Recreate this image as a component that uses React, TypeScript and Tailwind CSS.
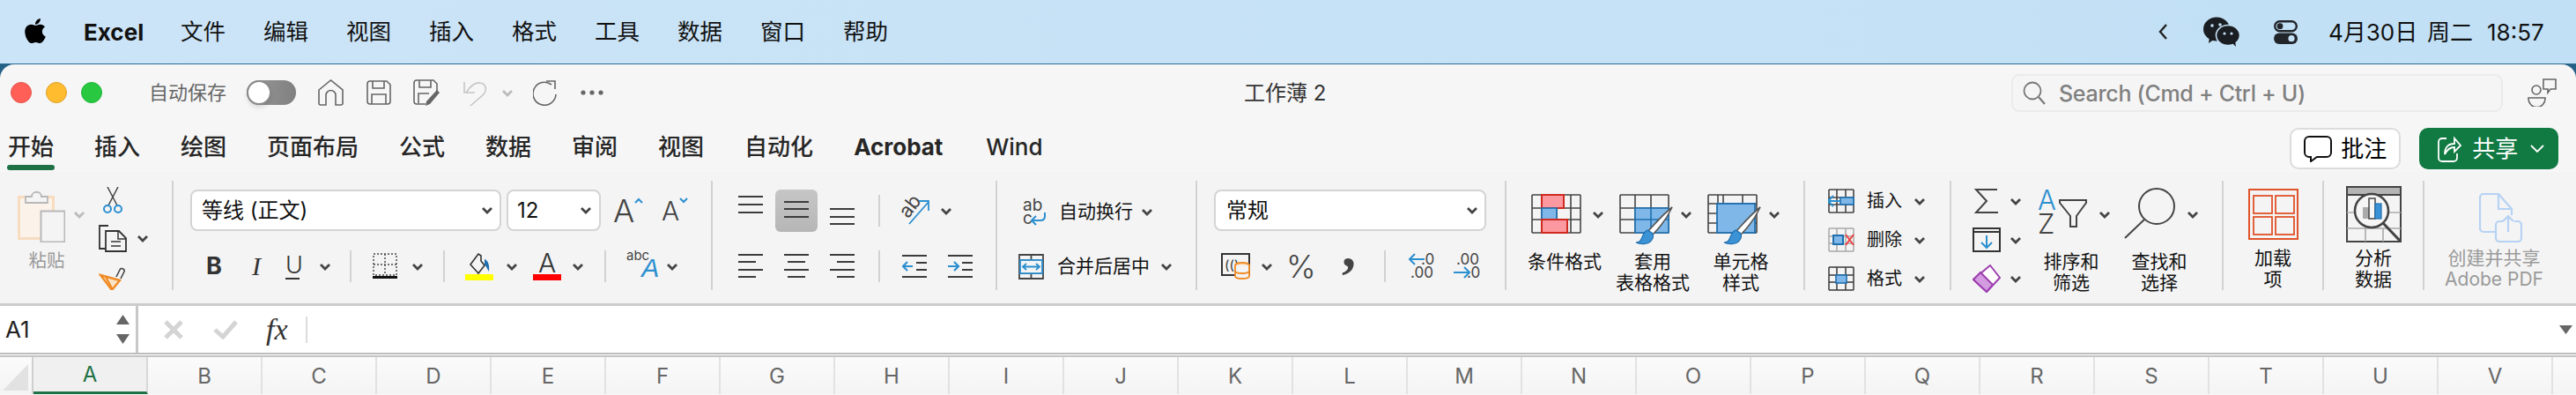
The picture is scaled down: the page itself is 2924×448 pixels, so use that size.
import { FaApple } from "react-icons/fa";

const menus = ["文件", "编辑", "视图", "插入", "格式", "工具", "数据", "窗口", "帮助"];
const tabs = ["插入", "绘图", "页面布局", "公式", "数据", "审阅", "视图", "自动化"];
const columns = "BCDEFGHIJKLMNOPQRSTUV".split("");

function Chevron({ className = "", color = "#444" }: { className?: string; color?: string }) {
  return (
    <svg width="14" height="9" viewBox="0 0 14 9" className={`shrink-0 ${className}`}>
      <path d="M2 2l5 5 5-5" fill="none" stroke={color} strokeWidth="2.8" />
    </svg>
  );
}

function Sep() {
  return <div className="h-[36px] w-[2px] shrink-0 bg-[#d2d2d2]" />;
}

function Lines({ ys, xs }: { ys: number[]; xs: [number, number][] }) {
  return (
    <svg width="28" height="28" viewBox="0 0 28 28">
      {ys.map((y, i) => (
        <line key={y} x1={xs[i][0]} x2={xs[i][1]} y1={y} y2={y} stroke="#3c3c3c" strokeWidth="2" />
      ))}
    </svg>
  );
}

const full: [number, number][] = [[0, 28], [0, 28], [0, 28], [0, 28]];

function Indent({ flip }: { flip?: boolean }) {
  return (
    <svg width="28" height="28" viewBox="0 0 28 28">
      <path d="M0 2h28M0 26h28" stroke="#3c3c3c" strokeWidth="2" />
      <path d="M16 10h12M16 18h12" stroke="#3c3c3c" strokeWidth="2" />
      {flip ? (
        <path d="M0 14h11M7 9l5 5-5 5" fill="none" stroke="#2b8fd0" strokeWidth="2.2" />
      ) : (
        <path d="M12 14H1M6 9l-5 5 5 5" fill="none" stroke="#2b8fd0" strokeWidth="2.2" />
      )}
    </svg>
  );
}

function GridBase({ x, y }: { x: number[]; y: number[] }) {
  return (
    <>
      {x.map((v) => (
        <line key={`x${v}`} x1={v} x2={v} y1={y[0]} y2={y[y.length - 1]} stroke="#444" strokeWidth="1.6" />
      ))}
      {y.map((v) => (
        <line key={`y${v}`} y1={v} y2={v} x1={x[0]} x2={x[x.length - 1]} stroke="#444" strokeWidth="1.6" />
      ))}
    </>
  );
}

function Brush() {
  return (
    <>
      <path d="M60 15C55 26 46 38 38 46l-5-4C41 33 51 22 60 15z" fill="#fff" stroke="#555" strokeWidth="1.6" />
      <path d="M32 41c-5 2-5 7-7 10-1 3-3 4-6 4 6 3 15 2 18-3 2-3 2-6 0-8z" fill="#3b93d6" stroke="#1f6fb0" strokeWidth="1.2" />
    </>
  );
}

function CellIcon({ kind }: { kind: "insert" | "delete" | "format" }) {
  return (
    <svg width="30" height="28" viewBox="0 0 30 28">
      <GridBase x={[1, 10, 20, 29]} y={[1, 10, 18, 27]} />
      {kind === "insert" && (
        <>
          <rect x="14" y="10" width="15" height="8" fill="#7fb8e8" stroke="#1f6fb0" strokeWidth="1.6" />
          <path d="M14 14H1M6 8l-6 6 6 6" fill="none" stroke="#2b8fd0" strokeWidth="2" />
        </>
      )}
      {kind === "delete" && (
        <>
          <rect x="0" y="0" width="30" height="28" fill="#f4f4f4" opacity="0.6" />
          <rect x="6" y="9" width="11" height="10" fill="#7fb8e8" stroke="#1f6fb0" strokeWidth="2" />
          <path d="M20 8l9 12M29 8l-9 12" stroke="#ee4040" strokeWidth="2" />
        </>
      )}
      {kind === "format" && (
        <>
          <rect x="9" y="10" width="12" height="9" fill="#7fb8e8" stroke="#1f6fb0" strokeWidth="1.6" />
        </>
      )}
    </svg>
  );
}

export default function App() {
  return (
    <div className="h-[448px] w-[2924px] overflow-hidden bg-[#245f85] [font-family:'Inter','Noto_Sans_CJK_SC',sans-serif] text-[#222]">
      <header className="flex h-[73px] items-center border-b-[1px] border-[#2a6d93] bg-gradient-to-r from-[#cce4f7] to-[#c1e0f5] text-[#111]">
        <FaApple className="ml-[25px] h-[32px] w-[30px] -translate-y-[1px] text-black" />
        <span className="ml-[40px] w-[70px] text-[26px] font-bold">Excel</span>
        <nav className="ml-[40px] flex gap-[43px] text-[25.5px]">
          {menus.map((m) => (
            <span key={m} className="w-[51px]">{m}</span>
          ))}
        </nav>
        <svg width="14" height="22" viewBox="0 0 14 22" className="ml-[1441px]">
          <path d="M10 3l-7 8 7 8" fill="none" stroke="#222" strokeWidth="2.4" />
        </svg>
        <svg width="42" height="34" viewBox="0 0 42 34" className="ml-[38px]">
          <ellipse cx="15" cy="14" rx="15" ry="13.5" fill="#1a1d21" />
          <path d="M7 23l-1 7 7-5z" fill="#1a1d21" />
          <ellipse cx="28" cy="21" rx="13.5" ry="11.5" fill="#1a1d21" stroke="#c4e1f5" strokeWidth="1.6" />
          <path d="M33 30l4 4-1-7z" fill="#1a1d21" />
          <circle cx="10" cy="10" r="1.8" fill="#c4e1f5" />
          <circle cx="19" cy="9" r="1.8" fill="#c4e1f5" />
          <circle cx="24" cy="19" r="1.6" fill="#c4e1f5" />
          <circle cx="32" cy="19" r="1.6" fill="#c4e1f5" />
        </svg>
        <svg width="27" height="27" viewBox="0 0 27 27" className="ml-[38px]">
          <rect x="1.2" y="1.2" width="24.6" height="11" rx="5.5" fill="none" stroke="#22262b" strokeWidth="2.4" />
          <circle cx="7" cy="6.7" r="3.4" fill="#22262b" />
          <rect y="14.5" width="27" height="12.5" rx="6.2" fill="#22262b" />
          <circle cx="20" cy="20.7" r="3.6" fill="#c4e1f5" />
        </svg>
        <span className="ml-[35px] w-[104px] whitespace-nowrap text-[26px]">4月30日</span>
        <span className="ml-[8px] text-[26px]">周二</span>
        <span className="ml-[16px] text-[26px]">18:57</span>
      </header>

      <main className="h-[375px] overflow-hidden rounded-t-[16px] bg-[#f6f6f6]">
        {/* title bar */}
        <div className="flex h-[64px] items-center">
          <div className="ml-[12px] h-[24px] w-[24px] rounded-full border border-[#e5534b] bg-[#ff5f57]" />
          <div className="ml-[16px] h-[24px] w-[24px] rounded-full border border-[#e0a028] bg-[#febc2e]" />
          <div className="ml-[16px] h-[24px] w-[24px] rounded-full border border-[#1fb53a] bg-[#28c840]" />
          <span className="ml-[53px] w-[88px] text-[22px] text-[#666]">自动保存</span>
          <div className="ml-[23px] flex h-[28px] w-[56px] items-center rounded-full bg-gradient-to-r from-[#9a9a9a] to-[#808080]">
            <div className="h-[28px] w-[28px] rounded-full border-2 border-[#8a8a8a] bg-white shadow-md" />
          </div>
          <svg width="29" height="30" viewBox="0 0 29 30" className="ml-[25px]">
            <path d="M1 12L14.5 1 28 12v15a2 2 0 0 1-2 2h-6V18a5 5 0 0 0-11 0v11H3a2 2 0 0 1-2-2z" fill="none" stroke="#666" strokeWidth="1.6" />
          </svg>
          <svg width="28" height="28" viewBox="0 0 28 28" className="ml-[26px]">
            <path d="M1 4a3 3 0 0 1 3-3h19l4 4v19a3 3 0 0 1-3 3H4a3 3 0 0 1-3-3z" fill="none" stroke="#666" strokeWidth="1.6" />
            <path d="M7 1v8h13V1M6 27V16h16v11" fill="none" stroke="#666" strokeWidth="1.6" />
          </svg>
          <svg width="31" height="30" viewBox="0 0 31 30" className="ml-[25px]">
            <path d="M1 4a3 3 0 0 1 3-3h19l4 4v8M14 28H4a3 3 0 0 1-3-3V4" fill="none" stroke="#666" strokeWidth="1.6" />
            <path d="M7 1v8h13V1M6 27V16h12" fill="none" stroke="#666" strokeWidth="1.6" />
            <path d="M27 12l3 3-11 13-5 2 1-5z" fill="#666" />
          </svg>
          <svg width="28" height="32" viewBox="0 0 28 32" className="ml-[25px]">
            <path d="M4 16C8 10 14 4 20 5c7 1 8 8 4 13L9 31M2 4v12h12" fill="none" stroke="#c6c6c6" strokeWidth="1.6" />
          </svg>
          <Chevron className="ml-[16px]" color="#bbb" />
          <svg width="27" height="30" viewBox="0 0 27 30" className="ml-[22px]">
            <path d="M21 6a13 13 0 1 0 5 11" fill="none" stroke="#666" strokeWidth="1.6" />
            <path d="M15 2h10v9" fill="none" stroke="#666" strokeWidth="1.6" />
          </svg>
          <svg width="26" height="6" viewBox="0 0 26 6" className="ml-[27px]">
            <circle cx="3" cy="3" r="2.6" fill="#666" />
            <circle cx="13" cy="3" r="2.6" fill="#666" />
            <circle cx="23" cy="3" r="2.6" fill="#666" />
          </svg>
          <span className="ml-[727px] w-[89px] whitespace-nowrap pt-[2px] text-[24px] text-[#333]">工作薄 2</span>
          <div className="ml-[782px] flex h-[43px] w-[558px] items-center rounded-[9px] border-2 border-[#ebebeb] bg-[#f5f5f5]">
            <svg width="26" height="27" viewBox="0 0 26 27" className="ml-[11px]">
              <circle cx="11" cy="11" r="9.5" fill="none" stroke="#777" strokeWidth="1.8" />
              <path d="M18 18l7 8" stroke="#777" strokeWidth="2" />
            </svg>
            <span className="ml-[15px] whitespace-nowrap pt-[3px] text-[25px] font-medium tracking-[-0.3px] text-[#808080]">Search (Cmd + Ctrl + U)</span>
          </div>
          <svg width="33" height="32" viewBox="0 0 33 32" className="ml-[28px]">
            <circle cx="10" cy="13" r="5" fill="none" stroke="#666" strokeWidth="1.6" />
            <path d="M1 22h19v1a9 9 0 0 1-19 0z" fill="none" stroke="#666" strokeWidth="1.6" />
            <path d="M18 1h14v11h-6l-3 4v-4h-5z" fill="none" stroke="#666" strokeWidth="1.6" />
          </svg>
        </div>

        {/* tabs */}
        <div className="flex h-[58px] items-start pl-[9px] pt-[8px] text-[26px] font-medium text-[#262626]">
          <div className="flex w-[52px] flex-col items-center">
            <span className="h-[42px] pt-[1px] leading-[42px]">开始</span>
            <div className="h-[6px] w-[54px] shrink-0 rounded-[3px] bg-[#1e7145]" />
          </div>
          <nav className="ml-[46px] mt-[1px] flex gap-[46px] leading-[42px]">
            {tabs.map((t) => (
              <span key={t} className="whitespace-nowrap">{t}</span>
            ))}
            <span className="w-[102px] font-bold">Acrobat</span>
            <span className="ml-[2px] w-[62px]">Wind</span>
          </nav>
          <button className="ml-[1418px] flex h-[47px] w-[126px] items-center rounded-[10px] border-2 border-[#dcdcdc] bg-white text-black">
            <svg width="32" height="30" viewBox="0 0 32 30" className="ml-[14px]">
              <path d="M6 1h20a5 5 0 0 1 5 5v13a5 5 0 0 1-5 5H15l-7 5v-5H6a5 5 0 0 1-5-5V6a5 5 0 0 1 5-5z" fill="none" stroke="#111" strokeWidth="2" />
            </svg>
            <span className="ml-[10px] text-[26px] font-normal">批注</span>
          </button>
          <button className="ml-[21px] flex h-[47px] w-[158px] items-center rounded-[10px] bg-[#117a43] text-white">
            <svg width="28" height="30" viewBox="0 0 28 30" className="ml-[20px]">
              <path d="M11 3H6a4 4 0 0 0-4 4v18a4 4 0 0 0 4 4h13a4 4 0 0 0 4-4v-5" fill="none" stroke="#fff" strokeWidth="1.8" />
              <path d="M9 21c0-8 4-12 11-12V3l7 8-7 7v-5c-5 0-8 2-11 8z" fill="none" stroke="#fff" strokeWidth="1.8" />
            </svg>
            <span className="ml-[12px] text-[26px] font-normal">共享</span>
            <svg width="16" height="10" viewBox="0 0 16 10" className="ml-[14px]">
              <path d="M1 1l7 7 7-7" fill="none" stroke="#fff" strokeWidth="1.8" />
            </svg>
          </button>
        </div>

        {/* ribbon */}
        <div className="flex h-[152px] border-b-[3px] border-[#cccccc] bg-[#f4f4f4] pt-[10px]">
          {/* clipboard */}
          <div className="flex h-[124px] w-[197px] border-r-2 border-[#d2d2d2]">
            <div className="ml-[20px] flex w-[54px] flex-col items-center pt-[11px]">
              <svg width="54" height="59" viewBox="0 0 54 59">
                <rect x="1.5" y="7.5" width="39" height="47" fill="#fbf3ea" stroke="#f8dcc0" strokeWidth="3" />
                <path d="M9 14V7h7c0-7 11-7 11 0h7v7z" fill="#f4f4f4" stroke="#b8b8b8" strokeWidth="1.8" />
                <rect x="26.5" y="23.5" width="27" height="35" fill="#f4f4f4" stroke="#b8b8b8" strokeWidth="2" />
              </svg>
              <span className="ml-[12px] mt-[6px] whitespace-nowrap text-[20.5px] text-[#9a9a9a]">粘贴</span>
            </div>
            <Chevron className="ml-[9px] mt-[34px]" color="#bbb" />
            <div className="ml-[15px] flex w-[60px] flex-col pt-[7px]">
              <svg width="22" height="30" viewBox="0 0 22 30" className="ml-[5px]">
                <path d="M5 0l11 21M17 0L6 21" stroke="#444" strokeWidth="1.5" />
                <circle cx="5" cy="25" r="4" fill="none" stroke="#2b8fd0" strokeWidth="2" />
                <circle cx="17" cy="25" r="4" fill="none" stroke="#2b8fd0" strokeWidth="2" />
              </svg>
              <div className="mt-[13px] flex items-center">
                <svg width="32" height="31" viewBox="0 0 32 31">
                  <path d="M11 1H1v26h9" fill="none" stroke="#333" strokeWidth="1.8" />
                  <path d="M8 7h15l8 8v15H8z" fill="#f4f4f4" stroke="#333" strokeWidth="1.8" />
                  <path d="M22 7v9h9M14 19h11M14 24h11" fill="none" stroke="#333" strokeWidth="1.5" />
                </svg>
                <Chevron className="ml-[11px]" />
              </div>
              <svg width="31" height="29" viewBox="0 0 31 29" className="mt-[14px]">
                <path d="M20 14l4-8c1-3 6-1 5 2l-4 8" fill="none" stroke="#444" strokeWidth="1.6" />
                <path d="M2 12l22 6-9 11z" fill="#fbe3c6" stroke="#f08a24" strokeWidth="2.4" />
                <path d="M8 14l7 13" stroke="#f08a24" strokeWidth="2.2" />
              </svg>
            </div>
          </div>

          {/* font */}
          <div className="h-[124px] w-[612px] border-r-2 border-[#d2d2d2] pl-[19px] pt-[10px]">
            <div className="flex h-[47px] items-center">
              <div className="flex h-[47px] w-[353px] items-center justify-between rounded-[8px] border-2 border-[#d4d4d4] bg-white pl-[11px] pr-[7px]">
                <span className="text-[24px] text-[#111]">等线 (正文)</span>
                <Chevron />
              </div>
              <div className="ml-[6px] flex h-[47px] w-[107px] items-center justify-between rounded-[8px] border-2 border-[#d4d4d4] bg-white pl-[10px] pr-[8px]">
                <span className="text-[24px] text-[#111]">12</span>
                <Chevron />
              </div>
              <div className="ml-[14px] flex w-[31px] items-start">
                <span className="text-[36px] font-light leading-[36px] text-[#444]">A</span>
                <svg width="10" height="7" viewBox="0 0 10 7" className="mt-[3px] shrink-0">
                  <path d="M1 6l4-4 4 4" fill="none" stroke="#2b8fd0" strokeWidth="2" />
                </svg>
              </div>
              <div className="ml-[24px] flex w-[27px] items-start">
                <span className="text-[30px] font-light leading-[36px] text-[#444]">A</span>
                <svg width="10" height="7" viewBox="0 0 10 7" className="mt-[3px] shrink-0">
                  <path d="M1 1l4 4 4-4" fill="none" stroke="#2b8fd0" strokeWidth="2" />
                </svg>
              </div>
            </div>
            <div className="mt-[20px] flex h-[40px] items-center">
              <span className="ml-[18px] w-[14px] text-[27px] font-bold leading-[30px] text-[#333]">B</span>
              <span className="ml-[38px] w-[12px] [font-family:'Liberation_Serif',serif] text-[30px] italic leading-[30px] text-[#333]">I</span>
              <span className="ml-[26px] w-[16px] border-b-2 border-[#333] text-center text-[27px] font-light leading-[28px] text-[#333]">U</span>
              <Chevron className="ml-[22px]" />
              <div className="ml-[21px]"><Sep /></div>
              <svg width="28" height="30" viewBox="0 0 28 30" className="ml-[24px]">
                <path d="M1 1h26v24H1zM14 1v24M1 13h26" fill="none" stroke="#444" strokeWidth="1.4" strokeDasharray="2 2" />
                <rect y="26" width="28" height="3" fill="#111" />
              </svg>
              <Chevron className="ml-[16px]" />
              <div className="ml-[22px]"><Sep /></div>
              <svg width="32" height="32" viewBox="0 0 32 32" className="ml-[23px]">
                <path d="M15 2l-9 12 9 10 7-9-4-5V4z" fill="none" stroke="#333" strokeWidth="1.6" />
                <path d="M22 8c4 1 6 7 5 14-2-3-3-6-5-8z" fill="#1f6fb0" />
                <rect y="25" width="32" height="7" fill="#ffff00" />
              </svg>
              <Chevron className="ml-[14px]" />
              <div className="ml-[17px] flex w-[32px] flex-col items-center">
                <span className="h-[24px] text-[30px] font-light leading-[24px] text-[#333]">A</span>
                <div className="mt-[1px] h-[7px] w-[32px] bg-[#ff0000]" />
              </div>
              <Chevron className="ml-[12px]" />
              <div className="ml-[23px]"><Sep /></div>
              <div className="ml-[23px] flex w-[38px] items-start">
                <span className="mt-[-5px] text-[15px] leading-[16px] text-[#444]">abc</span>
                <span className="-ml-[9px] mt-[3px] [font-family:'Liberation_Sans',sans-serif] text-[30px] italic leading-[28px] text-[#2b8fd0]">A</span>
              </div>
              <Chevron className="ml-[7px]" />
            </div>
          </div>

          {/* alignment */}
          <div className="h-[124px] w-[323px] border-r-2 border-[#d2d2d2] pl-[19px] pt-[10px]">
            <div className="flex h-[48px] items-center">
              <div className="flex h-[48px] w-[48px] items-start justify-center pt-[7px]">
                <Lines ys={[1, 10, 19]} xs={full} />
              </div>
              <div className="ml-[4px] flex h-[48px] w-[48px] items-start justify-center rounded-[6px] bg-gradient-to-b from-[#c6c6c6] to-[#b6b6b6] pt-[13px]">
                <Lines ys={[1, 9, 18]} xs={full} />
              </div>
              <div className="ml-[4px] flex h-[48px] w-[48px] items-start justify-center pt-[21px]">
                <Lines ys={[1, 10, 18]} xs={full} />
              </div>
              <div className="ml-[17px]"><Sep /></div>
              <svg width="34" height="31" viewBox="0 0 34 31" className="ml-[22px] overflow-visible">
                <text x="3" y="21" fontSize="22" fill="#444" transform="rotate(-52 10 16)">ab</text>
                <path d="M11 30L33 5M22 4h11v11" fill="none" stroke="#2b8fd0" strokeWidth="1.8" />
              </svg>
              <Chevron className="ml-[12px]" />
            </div>
            <div className="mt-[19px] flex h-[40px] items-center">
              <div className="flex w-[48px] justify-center">
                <Lines ys={[1, 9, 18, 26]} xs={[[0, 28], [0, 20], [0, 28], [0, 20]]} />
              </div>
              <div className="ml-[4px] flex w-[48px] justify-center">
                <Lines ys={[1, 9, 18, 26]} xs={[[0, 28], [4, 24], [0, 28], [4, 24]]} />
              </div>
              <div className="ml-[4px] flex w-[48px] justify-center">
                <Lines ys={[1, 9, 18, 26]} xs={[[0, 28], [8, 28], [0, 28], [8, 28]]} />
              </div>
              <div className="ml-[17px]"><Sep /></div>
              <div className="ml-[25px] flex gap-[24px]">
                <Indent />
                <Indent flip />
              </div>
            </div>
          </div>

          {/* wrap and merge */}
          <div className="h-[124px] w-[227px] border-r-2 border-[#d2d2d2] pt-[20px] text-[21px] text-[#111]">
            <div className="flex h-[30px] items-center pl-[29px]">
              <svg width="27" height="30" viewBox="0 0 27 30" className="overflow-visible">
                <text x="0" y="14" fontSize="19" fill="#444">ab</text>
                <text x="0" y="29" fontSize="19" fill="#444">c</text>
                <path d="M25 16v4c0 3-2 5-5 5h-9M15 20l-5 5 5 5" fill="none" stroke="#2b8fd0" strokeWidth="2" />
              </svg>
              <span className="ml-[14px] whitespace-nowrap">自动换行</span>
              <Chevron className="ml-[9px]" />
            </div>
            <div className="mt-[32px] flex h-[30px] items-center pl-[24px]">
              <svg width="29" height="29" viewBox="0 0 29 29">
                <path d="M1 1h27v27H1zM14.5 1v6M14.5 22v6M1 7h27M1 22h27" fill="none" stroke="#444" strokeWidth="1.8" />
                <rect x="2" y="7" width="25" height="15" fill="#f4f4f4" stroke="#2b8fd0" strokeWidth="1.8" />
                <path d="M5 14.5h19M9 11l-4 3.5L9 18M20 11l4 3.5-4 3.5" fill="none" stroke="#2b8fd0" strokeWidth="1.8" />
              </svg>
              <span className="ml-[15px] whitespace-nowrap">合并后居中</span>
              <Chevron className="ml-[12px]" />
            </div>
          </div>

          {/* number */}
          <div className="h-[124px] w-[351px] border-r-2 border-[#d2d2d2] pl-[19px] pt-[10px]">
            <div className="flex h-[47px] w-[309px] items-center justify-between rounded-[8px] border-2 border-[#d4d4d4] bg-white pl-[12px] pr-[7px]">
              <span className="text-[24px] text-[#111]">常规</span>
              <Chevron />
            </div>
            <div className="mt-[20px] flex h-[40px] items-center">
              <svg width="33" height="30" viewBox="0 0 33 30" className="ml-[8px]">
                <path d="M1 1h31v24H1z" fill="none" stroke="#333" strokeWidth="2" />
                <text x="4" y="19" fontSize="15" fill="#333">(()</text>
                <ellipse cx="24" cy="14" rx="8" ry="3" fill="#fbe3c6" stroke="#f08a24" strokeWidth="1.8" />
                <path d="M16 14v12c0 4 16 4 16 0V14M16 20c0 4 16 4 16 0" fill="#f4f4f4" stroke="#f08a24" strokeWidth="1.8" />
              </svg>
              <Chevron className="ml-[12px]" />
              <span className="ml-[15px] w-[33px] text-[36px] font-light leading-[36px] text-[#444]">%</span>
              <span className="ml-[30px] h-[36px] w-[16px] -translate-y-[21px] [font-family:'Liberation_Serif',serif] text-[64px] font-bold leading-[36px] text-[#444]">,</span>
              <div className="ml-[32px]"><Sep /></div>
              <div className="ml-[22px] flex w-[32px] flex-col text-right text-[17px] leading-[15px] text-[#444]">
                <div className="flex justify-end">
                  <svg width="20" height="14" viewBox="0 0 20 14" className="mr-[-5px] shrink-0">
                    <path d="M19 7H2M8 1L2 7l6 6" fill="none" stroke="#2b8fd0" strokeWidth="2" />
                  </svg>
                  <span className="w-[14px]">.0</span>
                </div>
                <span>.00</span>
              </div>
              <div className="ml-[22px] flex w-[30px] flex-col text-right text-[17px] leading-[15px] text-[#444]">
                <span>.00</span>
                <div className="flex justify-end">
                  <svg width="20" height="14" viewBox="0 0 20 14" className="mr-[-5px] shrink-0">
                    <path d="M0 7h17M12 1l6 6-6 6" fill="none" stroke="#2b8fd0" strokeWidth="2" />
                  </svg>
                  <span className="w-[14px]">.0</span>
                </div>
              </div>
            </div>
          </div>

          {/* styles */}
          <div className="flex h-[124px] w-[339px] border-r-2 border-[#d2d2d2] pl-[16px] text-center text-[21px] leading-[24px] text-[#111]">
            <div className="w-[100px] pt-[15px]">
              <div className="flex h-[65px] items-start pl-[12px]">
                <svg width="61" height="58" viewBox="0 0 61 58">
                  <GridBase x={[1, 12, 29, 45, 56]} y={[1, 16, 29, 44]} />
                  <rect x="12" y="1" width="25" height="15" fill="#fb98a0" stroke="#d02a20" strokeWidth="2" />
                  <rect x="12" y="16" width="17" height="13" fill="#7fb8e8" stroke="#1f6fb0" strokeWidth="1.6" />
                  <rect x="12" y="29" width="29" height="15" fill="#fb98a0" stroke="#d02a20" strokeWidth="2" />
                </svg>
                <Chevron className="ml-[8px] mt-[19px]" />
              </div>
              <span className="block whitespace-nowrap">条件格式</span>
            </div>
            <div className="w-[100px] pt-[15px]">
              <div className="flex h-[65px] items-start pl-[12px]">
                <svg width="61" height="58" viewBox="0 0 61 58">
                  <GridBase x={[1, 18, 36, 56]} y={[1, 16, 29, 44]} />
                  <rect x="18" y="16" width="38" height="28" fill="#7fb8e8" stroke="#1f6fb0" strokeWidth="1.6" />
                  <path d="M36 16v28M18 29h38" stroke="#1f6fb0" strokeWidth="1.6" />
                  <Brush />
                </svg>
                <Chevron className="ml-[8px] mt-[19px]" />
              </div>
              <span className="block whitespace-nowrap">套用<br />表格格式</span>
            </div>
            <div className="w-[100px] pt-[15px]">
              <div className="flex h-[65px] items-start pl-[12px]">
                <svg width="61" height="58" viewBox="0 0 61 58">
                  <GridBase x={[1, 12, 56]} y={[1, 11, 33, 44]} />
                  <path d="M18 1v10M40 1v10M1 22h11M12 44V33" stroke="#444" strokeWidth="1.6" />
                  <rect x="11" y="11" width="43" height="33" fill="#7fb8e8" stroke="#1f6fb0" strokeWidth="1.8" />
                  <Brush />
                </svg>
                <Chevron className="ml-[8px] mt-[19px]" />
              </div>
              <span className="block whitespace-nowrap">单元格<br />样式</span>
            </div>
          </div>

          {/* cells */}
          <div className="h-[124px] w-[166px] border-r-2 border-[#d2d2d2] pl-[26px] pt-[1px] text-[20px] text-[#111]">
            <div className="flex h-[44px] items-center">
              <CellIcon kind="insert" />
              <span className="ml-[14px] w-[42px]">插入</span>
              <Chevron className="ml-[11px]" />
            </div>
            <div className="flex h-[44px] items-center">
              <CellIcon kind="delete" />
              <span className="ml-[14px] w-[42px]">删除</span>
              <Chevron className="ml-[11px]" />
            </div>
            <div className="flex h-[44px] items-center">
              <CellIcon kind="format" />
              <span className="ml-[14px] w-[42px]">格式</span>
              <Chevron className="ml-[11px]" />
            </div>
          </div>

          {/* editing */}
          <div className="flex h-[124px] w-[309px] border-r-2 border-[#d2d2d2] pl-[24px] text-center text-[21px] leading-[24px] text-[#111]">
            <div className="w-[56px] pt-[1px]">
              <div className="flex h-[44px] items-center">
                <svg width="32" height="28" viewBox="0 0 32 28">
                  <path d="M28 1H4l12 13L4 27h25" fill="none" stroke="#444" strokeWidth="2" />
                </svg>
                <Chevron className="ml-[10px]" />
              </div>
              <div className="flex h-[44px] items-center">
                <svg width="32" height="28" viewBox="0 0 32 28">
                  <rect x="1" y="1" width="30" height="26" fill="none" stroke="#333" strokeWidth="2" />
                  <path d="M1 5h30" stroke="#333" strokeWidth="2" />
                  <path d="M16 9v14M10 17l6 6 6-6" fill="none" stroke="#2b8fd0" strokeWidth="2" />
                </svg>
                <Chevron className="ml-[10px]" />
              </div>
              <div className="flex h-[44px] items-center">
                <svg width="32" height="32" viewBox="0 0 32 32">
                  <path d="M20 1l11 14-15 16L1 17z" fill="#fff" stroke="#9c3fb0" strokeWidth="2" />
                  <path d="M9 9l14 14-7 8L1 17z" fill="#d49be0" stroke="#9c3fb0" strokeWidth="2" />
                </svg>
                <Chevron className="ml-[10px]" />
              </div>
            </div>
            <div className="ml-[10px] w-[92px] pt-[8px]">
              <div className="flex h-[72px] items-start pl-[8px]">
                <div className="flex h-[58px] w-[56px] items-start">
                  <div className="flex w-[22px] flex-col text-left text-[31px] font-light leading-[27px]">
                    <span className="text-[#2b8fd0]">A</span>
                    <span className="text-[#444]">Z</span>
                  </div>
                  <svg width="32" height="32" viewBox="0 0 32 32" className="ml-[2px] mt-[13px] shrink-0">
                    <path d="M1 1h30v3L20 19v12h-7V19L1 4z" fill="none" stroke="#444" strokeWidth="2" />
                  </svg>
                </div>
                <Chevron className="ml-[13px] mt-[26px]" />
              </div>
              <span className="block whitespace-nowrap">排序和<br />筛选</span>
            </div>
            <div className="ml-[8px] w-[92px] pt-[8px]">
              <div className="flex h-[72px] items-start pl-[6px]">
                <svg width="58" height="58" viewBox="0 0 58 58" className="shrink-0">
                  <ellipse cx="37" cy="21" rx="20" ry="20" fill="none" stroke="#444" strokeWidth="2" />
                  <path d="M23 36L1 57" stroke="#444" strokeWidth="2" />
                </svg>
                <Chevron className="ml-[13px] mt-[26px]" />
              </div>
              <span className="block whitespace-nowrap">查找和<br />选择</span>
            </div>
          </div>

          {/* add-ins */}
          <div className="flex h-[124px] w-[114px] flex-col items-center border-r-2 border-[#d2d2d2] pt-[9px] text-center text-[21px] leading-[24px] text-[#111]">
            <div className="h-[71px]">
              <svg width="57" height="58" viewBox="0 0 57 58">
                <rect x="1" y="1" width="55" height="56" fill="none" stroke="#e0532a" strokeWidth="2" />
                <rect x="6" y="8" width="21" height="20" fill="none" stroke="#e0532a" strokeWidth="1.8" />
                <rect x="31" y="8" width="21" height="20" fill="none" stroke="#e0532a" strokeWidth="1.8" />
                <rect x="6" y="32" width="21" height="20" fill="none" stroke="#e0532a" strokeWidth="1.8" />
                <rect x="31" y="32" width="21" height="20" fill="none" stroke="#e0532a" strokeWidth="1.8" />
              </svg>
            </div>
            <span>加载<br />项</span>
          </div>

          {/* analyze */}
          <div className="flex h-[124px] w-[114px] flex-col items-center border-r-2 border-[#d2d2d2] pt-[6px] text-center text-[21px] leading-[24px] text-[#111]">
            <div className="h-[74px]">
              <svg width="63" height="64" viewBox="0 0 63 64">
                <rect x="1" y="1" width="61" height="62" fill="#f4f4f4" stroke="#444" strokeWidth="2" />
                <rect x="1" y="1" width="61" height="9" fill="#b4b4b4" stroke="#444" strokeWidth="2" />
                <path d="M1 30h61M1 48h61M22 48v15M42 48v15" stroke="#aaa" strokeWidth="1.6" />
                <circle cx="29" cy="28" r="19" fill="#f6f6f6" stroke="#444" strokeWidth="2.6" />
                <path d="M42 42l20 21" stroke="#444" strokeWidth="3" />
                <rect x="19" y="24" width="8" height="13" fill="#aaa" />
                <rect x="26" y="14" width="7" height="23" fill="#f6f6f6" stroke="#444" strokeWidth="1.5" />
                <rect x="33" y="20" width="7" height="17" fill="#3b93d6" stroke="#1f6fb0" strokeWidth="1.2" />
              </svg>
            </div>
            <span>分析<br />数据</span>
          </div>

          {/* adobe */}
          <div className="ml-[23px] flex h-[124px] w-[112px] flex-col items-center pt-[14px] text-center text-[21px] leading-[24px] text-[#9a9a9a]">
            <div className="ml-[15px] h-[66px]">
              <svg width="49" height="56" viewBox="0 0 49 56">
                <path d="M19 44H5a4 4 0 0 1-4-4V5a4 4 0 0 1 4-4h17l15 17v7" fill="none" stroke="#b6d2f4" strokeWidth="2.2" />
                <path d="M22 1v17h15" fill="none" stroke="#b6d2f4" strokeWidth="2.2" />
                <path d="M27 32h-4a4 4 0 0 0-4 4v15a4 4 0 0 0 4 4h21a4 4 0 0 0 4-4V36a4 4 0 0 0-4-4h-4" fill="none" stroke="#b6d2f4" strokeWidth="2.2" />
                <path d="M33 44V26M27 32l6-6 6 6" fill="none" stroke="#b6d2f4" strokeWidth="2.2" />
              </svg>
            </div>
            <span className="whitespace-nowrap">创建并共享<br />Adobe PDF</span>
          </div>
        </div>

        {/* formula bar */}
        <div className="flex h-[53px] items-stretch bg-white">
          <div className="flex w-[157px] items-center border-r-[3px] border-[#c8c8c8] pl-[6px]">
            <span className="text-[26px] text-[#222]">A1</span>
            <div className="ml-auto mr-[7px] flex flex-col gap-[11px]">
              <svg width="15" height="11" viewBox="0 0 15 11"><path d="M7.5 0L15 11H0z" fill="#666" /></svg>
              <svg width="15" height="11" viewBox="0 0 15 11"><path d="M0 0h15L7.5 11z" fill="#666" /></svg>
            </div>
          </div>
          <svg width="22" height="22" viewBox="0 0 22 22" className="ml-[29px] self-center">
            <path d="M2 2l18 18M20 2L2 20" stroke="#d4d4d4" strokeWidth="5" />
          </svg>
          <svg width="28" height="22" viewBox="0 0 28 22" className="ml-[34px] self-center">
            <path d="M2 11l9 8L26 2" fill="none" stroke="#d4d4d4" strokeWidth="5" />
          </svg>
          <span className="ml-[32px] w-[32px] self-center [font-family:'Liberation_Serif',serif] text-[34px] italic leading-[40px] text-[#333]">fx</span>
          <div className="ml-[13px] h-[30px] w-[2px] self-center bg-[#dcdcdc]" />
          <svg width="15" height="10" viewBox="0 0 15 10" className="ml-[2556px] self-center">
            <path d="M0 0h15L7.5 10z" fill="#666" />
          </svg>
        </div>
        <div className="h-[2px] bg-[#bdbdbd]" />
        <div className="h-[1px] bg-white" />
        <div className="h-[2px] bg-[#c4c4c4]" />

        {/* column headers */}
        <div className="flex h-[42px] bg-gradient-to-b from-[#fbfbfb] to-[#f4f4f4] pt-0 text-[24px] text-[#666]">
          <div className="flex w-[38px] items-end border-r-2 border-[#d0d0d0] pb-[4px] pl-[3px]">
            <svg width="29" height="30" viewBox="0 0 29 30"><path d="M29 0v30H0z" fill="#e2e2e2" /></svg>
          </div>
          <div className="flex w-[130px] items-center justify-center border-b-[3px] border-r-2 border-b-[#1e7145] border-r-[#d8d8d8] bg-[#f0f0f0] text-[#1e7145]">A</div>
          {columns.map((c) => (
            <div key={c} className="flex w-[130px] items-center justify-center border-r-2 border-[#e2e2e2] pt-[2px]">{c}</div>
          ))}
        </div>
      </main>
    </div>
  );
}
